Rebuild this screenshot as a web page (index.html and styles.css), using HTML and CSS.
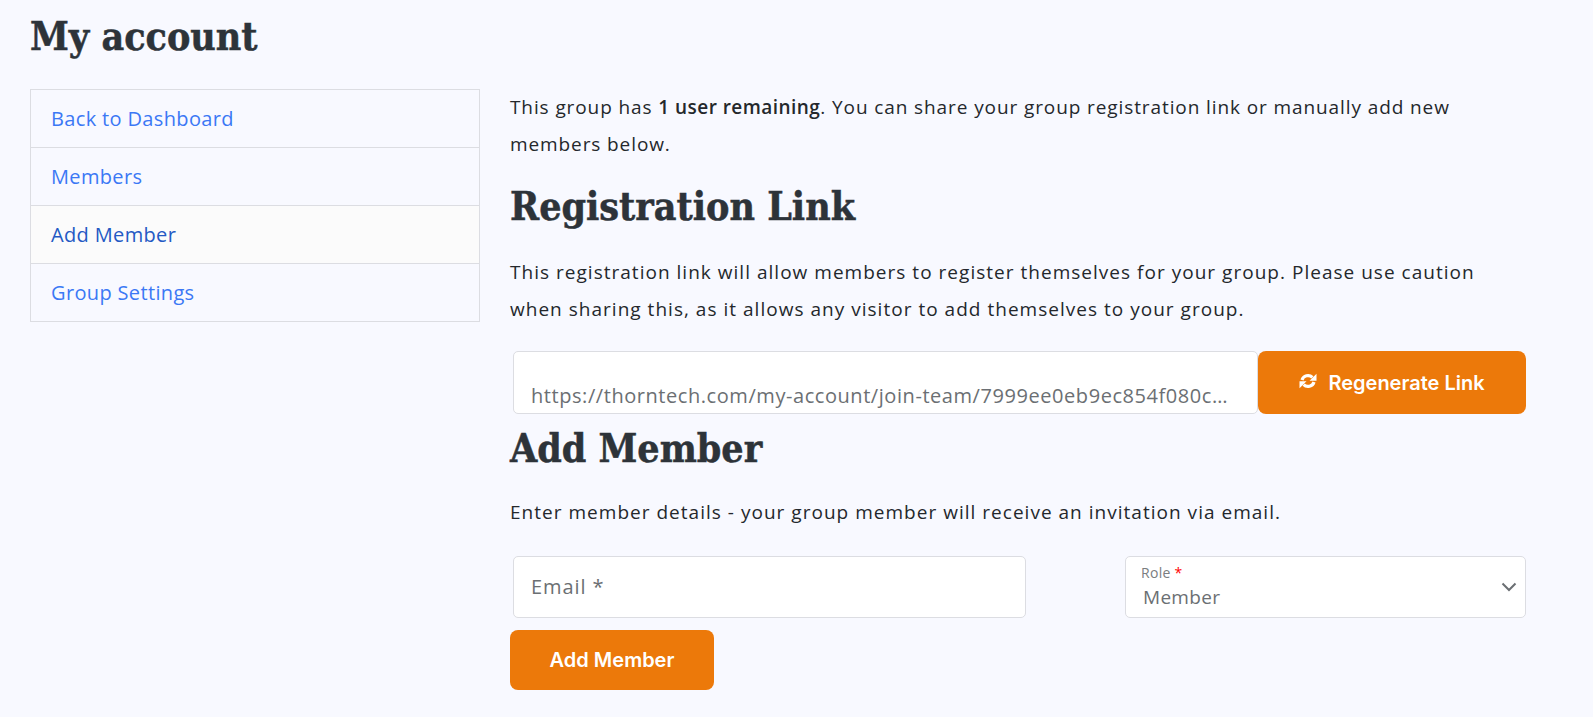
FILE: index.html
```html
<!DOCTYPE html>
<html lang="en">
<head>
<meta charset="utf-8">
<title>My account</title>
<link rel="stylesheet" href="styles.css">
</head>
<body>
<div class="page">
  <h1 class="page-title">My account</h1>
  <div class="layout">
    <nav class="side-nav">
      <a class="side-link" href="#">Back to Dashboard</a>
      <a class="side-link" href="#">Members</a>
      <a class="side-link is-active" href="#">Add Member</a>
      <a class="side-link" href="#">Group Settings</a>
    </nav>
    <main class="content">
      <p class="copy">This group has <strong>1 user remaining</strong>. You can share your group registration link or manually add new members below.</p>
      <h2 class="section-title first">Registration Link</h2>
      <p class="copy copy-wide">This registration link will allow members to register themselves for your group. Please use caution when sharing this, as it allows any visitor to add themselves to your group.</p>
      <div class="link-row">
        <input class="field link-field" type="text" readonly value="https://thorntech.com/my-account/join-team/7999ee0eb9ec854f080c4b3a91d2f6e7">
        <button class="btn btn-regen" type="button">
          <svg class="sync-icon" viewBox="0 0 18 16" aria-hidden="true">
            <path class="sync-arc" d="M3 7A6.200 6 0 0 1 13.400 4.400"/>
            <path class="sync-arc" d="M15 9A6.200 6 0 0 1 4.600 11.600"/>
            <path class="sync-head" d="M17.500.800v7h-7zM.5 15.200v-7h7z"/>
          </svg>
          Regenerate Link
        </button>
      </div>
      <h2 class="section-title second">Add Member</h2>
      <p class="copy copy-wide">Enter member details - your group member will receive an invitation via email.</p>
      <div class="member-row">
        <input class="field email-field" type="text" placeholder="Email *">
        <div class="field role-field">
          <span class="role-label">Role <span class="req">*</span></span>
          <span class="role-value">Member</span>
          <svg class="chevron" viewBox="0 0 16 10" aria-hidden="true"><path d="M1.500 1.500 8 8l6.500-6.500"/></svg>
        </div>
      </div>
      <button class="btn btn-add" type="button">Add Member</button>
    </main>
  </div>
</div>
</body>
</html>
```
FILE: styles.css
```css
* { box-sizing: border-box; }
html, body { margin: 0; height: 100%; }
body {
  background: #f8f9ff;
  color: #212529;
  font-family: "Open Sans", "Noto Sans", sans-serif;
  font-size: 19px;
  overflow: hidden;
}
.page { padding: 0 30px; }
.page-title {
  margin: 0;
  padding-top: 12px;
  height: 89px;
  font-family: "DejaVu Serif Condensed", "DejaVu Serif", serif;
  font-size: 39px;
  line-height: 48px;
  font-weight: 700;
  color: #2d3339;
  -webkit-text-stroke: .5px #2d3339;
}
.layout { display: grid; grid-template-columns: 450px 1fr; column-gap: 30px; align-items: start; }
.side-nav { display: flex; flex-direction: column; border: 1px solid #dcdde2; border-bottom: 0; }
.side-link {
  display: block;
  height: 58px;
  padding: 0 20px;
  line-height: 57px;
  border-bottom: 1px solid #dcdde2;
  color: #3b78f5;
  text-decoration: none;
  font-size: 20px;
  letter-spacing: .35px;
}
.side-link.is-active { background: #fbfbfb; color: #2359c4; }
.content { width: 1017px; }
.copy { margin: 0; line-height: 37px; font-size: 19px; letter-spacing: .9px; color: #24282c; }
.copy-wide { letter-spacing: 1.020px; }
.copy strong { font-weight: 600; letter-spacing: .45px; }
.section-title {
  font-family: "DejaVu Serif Condensed", "DejaVu Serif", serif;
  font-weight: 700;
  font-size: 39px;
  line-height: 48px;
  color: #2d3339;
  -webkit-text-stroke: .5px #2d3339;
}
.section-title.first { margin: 19px 0 24px; }
.section-title.second { margin: 10px 0 22px; }
.link-row { display: flex; margin: 23px 0 0 3px; height: 63px; }
.field {
  background: #fff;
  border: 1px solid #dcdde2;
  border-radius: 5px;
  color: #6b6f73;
  font-family: "Open Sans", "Noto Sans", sans-serif;
  font-size: 20px;
  letter-spacing: .56px;
  outline: 0;
}
.field::placeholder { color: #6b6f73; opacity: 1; }
.link-field { flex: 0 0 745px; padding: 25px 20px 0 17px; text-overflow: ellipsis; }
.btn {
  border: 0;
  border-radius: 8px;
  background: #ec790a;
  color: #fff;
  font-family: Inter, sans-serif;
  font-weight: 600;
  font-size: 20px;
}
.btn-regen { flex: 0 0 268px; display: flex; align-items: center; justify-content: center; gap: 11px; }
.sync-icon { width: 18px; height: 16px; margin-top: -4px; }
.sync-arc { fill: none; stroke: #fff; stroke-width: 3.200; }
.sync-head { fill: #fff; }
.member-row { display: flex; justify-content: space-between; margin: 25px 0 0 3px; width: 1013px; height: 62px; }
.email-field { width: 513px; padding: 0 17px 2px; letter-spacing: .9px; }
.role-field { position: relative; width: 401px; display: flex; flex-direction: column; padding: 8px 15px 0; letter-spacing: .3px; }
.role-label { font-size: 14px; line-height: 16px; color: #7a7d80; }
.req { color: #f00; }
.role-value { font-size: 19px; line-height: 33px; padding-left: 2px; }
.chevron { position: absolute; right: 8px; top: 25px; width: 16px; height: 10px; fill: none; stroke: #6b6f73; stroke-width: 2; }
.btn-add { display: block; width: 204px; height: 60px; margin-top: 12px; }
```
